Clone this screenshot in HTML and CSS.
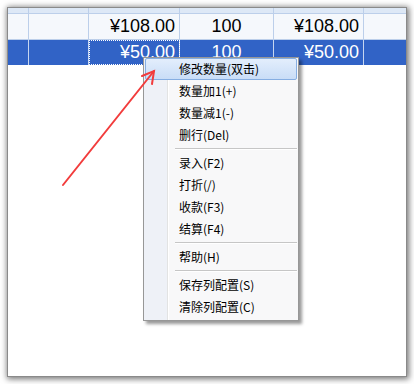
FILE: index.html
```html
<!DOCTYPE html>
<html lang="en">
<head>
    <meta charset="UTF-8">
    <title>收银 - 右键菜单</title>
    <link rel="stylesheet" href="styles.css">
</head>
<body>
    <div class="panel">
        <!-- Order grid -->
        <div class="grid">
            <div class="row head">
                <div class="cell c0"></div>
                <div class="cell c1"></div>
                <div class="cell c2"></div>
                <div class="cell c3"></div>
                <div class="cell c4"></div>
                <div class="cell c5"></div>
            </div>
            <div class="row">
                <div class="cell c0"></div>
                <div class="cell c1"></div>
                <div class="cell c2 num">¥108.00</div>
                <div class="cell c3 mid">100</div>
                <div class="cell c4 num">¥108.00</div>
                <div class="cell c5"></div>
            </div>
            <div class="row selected">
                <div class="cell c0"></div>
                <div class="cell c1"></div>
                <div class="cell c2 num focus">¥50.00</div>
                <div class="cell c3 mid">100</div>
                <div class="cell c4 num">¥50.00</div>
                <div class="cell c5"></div>
            </div>
        </div>

        <!-- Context menu -->
        <ul class="menu">
            <li class="item active">修改数量(双击)</li>
            <li class="item">数量加1(+)</li>
            <li class="item">数量减1(-)</li>
            <li class="item">删行(Del)</li>
            <li class="sep"></li>
            <li class="item">录入(F2)</li>
            <li class="item">打折(/)</li>
            <li class="item">收款(F3)</li>
            <li class="item">结算(F4)</li>
            <li class="sep"></li>
            <li class="item">帮助(H)</li>
            <li class="sep"></li>
            <li class="item">保存列配置(S)</li>
            <li class="item">清除列配置(C)</li>
        </ul>
    </div>

    <!-- Annotation arrow -->
    <svg class="arrow" width="414" height="384" viewBox="0 0 414 384">
        <g stroke="#f23c3c" stroke-width="2" fill="none" stroke-linecap="round">
            <line x1="63" y1="185" x2="154" y2="71"/>
            <polyline points="142,76 154,71 152,84"/>
        </g>
    </svg>
</body>
</html>
```

FILE: styles.css
```css
body {
    margin: 0;
    padding: 7px;
    width: 414px;
    height: 384px;
    box-sizing: border-box;
    background: #fff;
    position: relative;
    overflow: hidden;
}

.panel {
    position: relative;
    width: 400px;
    height: 370px;
    box-sizing: border-box;
    border: 1px solid #8a8a8a;
    background: #fff;
    box-shadow: 1px 1px 6px 1px rgba(0, 0, 0, 0.55);
}

.grid {
    display: flex;
    flex-direction: column;
}

.row {
    display: flex;
    height: 25px;
    background: #f5f8fc;
    border-bottom: 1px solid #bccfea;
}

.row.head {
    height: 5px;
    background: #dde8f6;
}

.row.selected {
    background: #3163c6;
    color: #fff;
    border-bottom: none;
}

.cell {
    box-sizing: border-box;
    border-right: 1px solid #bccfea;
    font-family: "Liberation Sans", Arial, sans-serif;
    font-size: 18px;
    line-height: 25px;
}

.selected .cell {
    border-right-color: #c6d6f0;
}

.c0 { width: 21px; }
.c1 { width: 60px; }
.c2 { width: 91px; }
.c3 { width: 94px; }
.c4 { width: 90px; }
.c5 { flex: 1; border-right: none; }

.num {
    text-align: right;
    padding-right: 4px;
}

.mid {
    text-align: center;
}

.focus {
    outline: 1px dotted #fff;
    outline-offset: -1px;
}

.menu {
    position: absolute;
    left: 135px;
    top: 49px;
    width: 156px;
    margin: 0;
    padding: 0 0 2px;
    list-style: none;
    box-sizing: border-box;
    border: 1px solid #979797;
    background: linear-gradient(to right, #eef1f7 0, #eef1f7 23px, #e2e3e3 23px, #e2e3e3 24px, #fff 24px, #fff 25px, #f8f8f9 25px);
    box-shadow: 3px 3px 3px rgba(0, 0, 0, 0.4);
    font-family: "Noto Sans CJK SC", "Microsoft YaHei", sans-serif;
    font-size: 12px;
    color: #000;
}

.item {
    height: 22px;
    line-height: 22px;
    padding-left: 34px;
    margin: 0 1px;
    box-sizing: border-box;
}

.item.active {
    border: 1px solid #86aee2;
    border-radius: 2px;
    background: linear-gradient(#e3eefc, #c9ddf7);
    line-height: 20px;
    padding-left: 33px;
}

.sep {
    height: 6px;
    margin-left: 31px;
    margin-right: 1px;
    background: linear-gradient(transparent 2px, #c6c6c6 2px, #c6c6c6 3px, #fff 3px, #fff 4px, transparent 4px);
}

.arrow {
    position: absolute;
    left: 0;
    top: 0;
    pointer-events: none;
}
```
